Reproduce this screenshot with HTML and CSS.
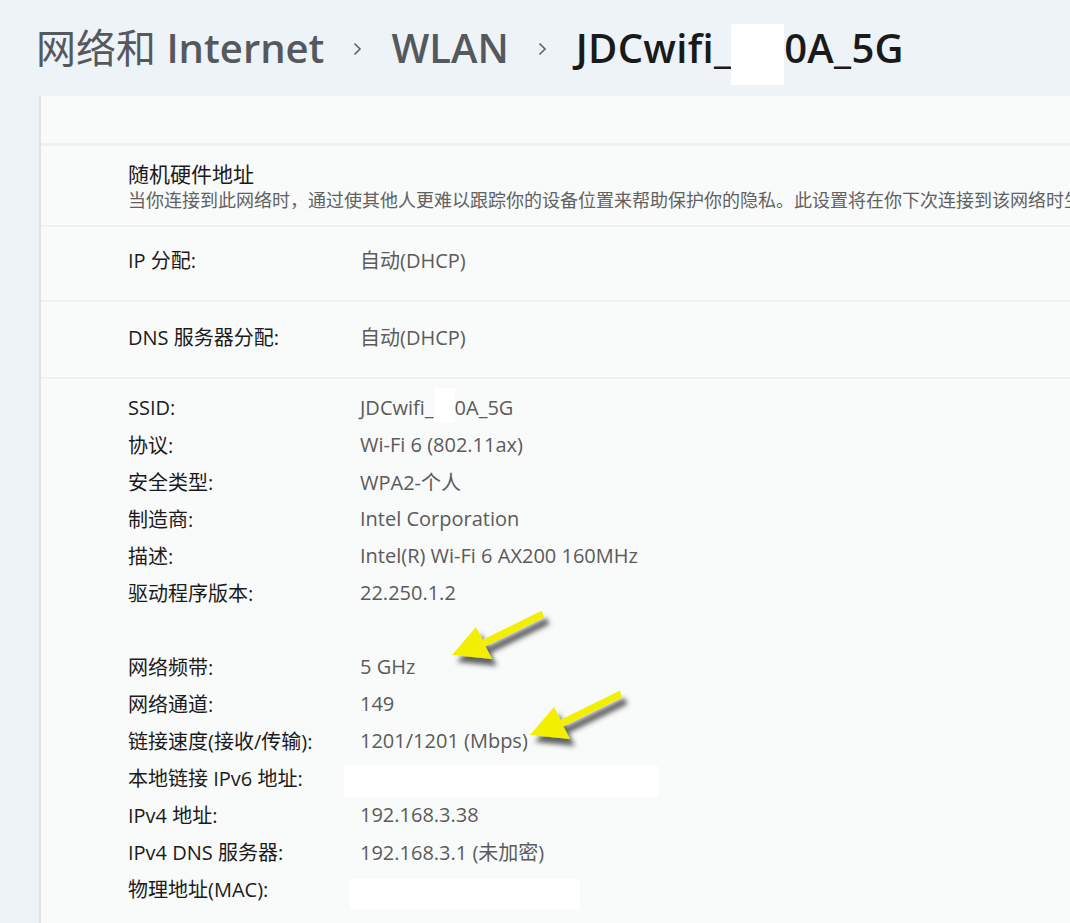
FILE: index.html
```html
<!DOCTYPE html>
<html lang="zh-CN">
<head>
    <meta charset="UTF-8">
    <meta name="viewport" content="width=device-width, initial-scale=1.0">
    <title>WLAN 属性</title>
    <link rel="stylesheet" href="styles.css">
</head>
<body>
    <!-- Breadcrumb -->
    <header class="breadcrumb">
        <span class="crumb"><span class="crumb-cjk">网络和</span> Internet</span>
        <svg class="chevron" width="9" height="14" viewBox="0 0 9 14"><polyline points="1.5,1.5 7,7 1.5,12.5"/></svg>
        <span class="crumb">WLAN</span>
        <svg class="chevron" width="9" height="14" viewBox="0 0 9 14"><polyline points="1.5,1.5 7,7 1.5,12.5"/></svg>
        <span class="crumb current">JDCwifi_<span class="redact redact-title"></span>0A_5G</span>
    </header>

    <main class="panel">
        <div class="section section-blank"></div>

        <div class="section section-random">
            <div class="setting-title">随机硬件地址</div>
            <div class="setting-desc">当你连接到此网络时，通过使其他人更难以跟踪你的设备位置来帮助保护你的隐私。此设置将在你下次连接到该网络时生效。</div>
        </div>

        <div class="section section-row section-ip">
            <span class="label">IP 分配:</span>
            <span class="value">自动(DHCP)</span>
        </div>

        <div class="section section-row section-dns">
            <span class="label">DNS 服务器分配:</span>
            <span class="value">自动(DHCP)</span>
        </div>

        <!-- Properties -->
        <div class="section props">
            <div class="prop"><span class="label">SSID:</span><span class="value">JDCwifi_<span class="redact redact-ssid"></span>0A_5G</span></div>
            <div class="prop"><span class="label">协议:</span><span class="value">Wi-Fi 6 (802.11ax)</span></div>
            <div class="prop"><span class="label">安全类型:</span><span class="value">WPA2-个人</span></div>
            <div class="prop"><span class="label">制造商:</span><span class="value">Intel Corporation</span></div>
            <div class="prop"><span class="label">描述:</span><span class="value">Intel(R) Wi-Fi 6 AX200 160MHz</span></div>
            <div class="prop"><span class="label">驱动程序版本:</span><span class="value">22.250.1.2</span></div>
            <div class="prop"></div>
            <div class="prop"><span class="label">网络频带:</span><span class="value">5 GHz</span></div>
            <div class="prop"><span class="label">网络通道:</span><span class="value">149</span></div>
            <div class="prop"><span class="label">链接速度(接收/传输):</span><span class="value">1201/1201 (Mbps)</span></div>
            <div class="prop"><span class="label">本地链接 IPv6 地址:</span><span class="value"><span class="redact redact-ipv6"></span></span></div>
            <div class="prop"><span class="label">IPv4 地址:</span><span class="value">192.168.3.38</span></div>
            <div class="prop"><span class="label">IPv4 DNS 服务器:</span><span class="value">192.168.3.1 (未加密)</span></div>
            <div class="prop"><span class="label">物理地址(MAC):</span><span class="value"><span class="redact redact-mac"></span></span></div>
        </div>
    </main>

    <!-- Yellow arrows drawn over the screenshot -->
    <svg class="arrow arrow-band" width="120" height="80" viewBox="-5 -50 120 80">
        <defs>
            <filter id="arrowShadow" x="-30%" y="-30%" width="160%" height="170%">
                <feDropShadow dx="5" dy="7" stdDeviation="2.5" flood-color="#3a3a3a" flood-opacity="0.8"/>
            </filter>
        </defs>
        <path d="M0,0 L24,-28 L30.6,-15.2 L89.6,-44.2 L92.4,-37.8 L33.4,-8.8 L40,4 Z"/>
    </svg>
    <svg class="arrow arrow-speed" width="120" height="80" viewBox="-5 -50 120 80">
        <path d="M0,0 L24,-28 L30.6,-15.2 L89.6,-44.2 L92.4,-37.8 L33.4,-8.8 L40,4 Z"/>
    </svg>
</body>
</html>
```

FILE: styles.css
```css
body {
    margin: 0;
    width: 1070px;
    height: 923px;
    overflow: hidden;
    position: relative;
    background-color: #eef3f8;
    font-family: "Open Sans", "Noto Sans CJK SC", sans-serif;
    color: #1b1b1b;
}

/* Breadcrumb */
.breadcrumb {
    height: 96px;
    box-sizing: border-box;
    padding-left: 36px;
    display: flex;
    align-items: center;
    gap: 29px;
    font-size: 40px;
    line-height: 52px;
    font-weight: 600;
    color: #55595d;
    white-space: nowrap;
}
.crumb-cjk {
    font-weight: 400;
}
.crumb.current {
    color: #1a1a1a;
    letter-spacing: 0.3px;
}
.chevron {
    fill: none;
    stroke: #5f6367;
    stroke-width: 1.6;
    margin-top: 2px;
}

/* Redaction boxes */
.redact {
    display: inline-block;
    background-color: #fff;
    vertical-align: baseline;
}
.redact-title {
    width: 53px;
    height: 61px;
    margin-top: -39px;
    margin-bottom: -22px;
}
.redact-ssid {
    width: 21px;
    height: 35px;
    margin-top: -27px;
    margin-bottom: -8px;
}
.redact-ipv6 {
    width: 314px;
    height: 31px;
    margin-left: -16px;
    margin-top: -19px;
    margin-bottom: -12px;
}
.redact-mac {
    width: 230px;
    height: 31px;
    margin-left: -10px;
    margin-top: -17px;
    margin-bottom: -14px;
}

/* Settings panel */
.panel {
    margin-left: 39px;
    height: 827px;
    border-left: 2px solid #e0e3e6;
    background-color: #f9fafa;
    overflow: hidden;
}
.section {
    padding-left: 87px;
    border-top: 2px solid #eef0f1;
    box-sizing: border-box;
}
.section-blank {
    height: 47px;
    border-top: none;
}
.section-random {
    height: 82px;
    border-top-width: 3px;
    padding-top: 15px;
}
.setting-title {
    font-size: 21px;
    line-height: 27px;
}
.setting-desc {
    font-size: 18px;
    line-height: 24px;
    color: #616161;
    white-space: nowrap;
}
.section-row {
    display: flex;
    align-items: center;
    font-size: 20px;
}
.section-ip {
    height: 75px;
    padding-bottom: 8px;
}
.section-dns {
    height: 77px;
    padding-bottom: 6px;
}
.label {
    width: 232px;
    flex-shrink: 0;
}
.value {
    color: #5b5b5b;
}

/* Property list */
.props {
    padding-top: 10px;
    font-size: 20px;
}
.prop {
    height: 37px;
    display: flex;
    align-items: center;
    white-space: nowrap;
}

/* Arrows */
.arrow {
    position: absolute;
    fill: #f3ef00;
    filter: url(#arrowShadow);
}
.arrow-band {
    left: 447px;
    top: 605px;
}
.arrow-speed {
    left: 525px;
    top: 685px;
}
```
